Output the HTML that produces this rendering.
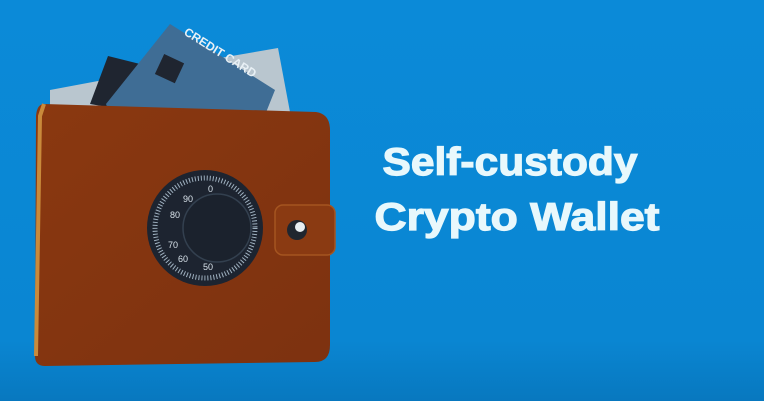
<!DOCTYPE html>
<html><head><style>
html,body{margin:0;padding:0;width:764px;height:401px;overflow:hidden;background:#0a88d6}
</style></head><body>
<svg width="764" height="401" viewBox="0 0 764 401" xmlns="http://www.w3.org/2000/svg">
<defs>
<linearGradient id="bg" x1="0" y1="0" x2="0" y2="1"><stop offset="0" stop-color="#0b8ad8"/><stop offset="0.85" stop-color="#0a86d2"/><stop offset="1" stop-color="#0877bd"/></linearGradient>
<linearGradient id="band" x1="0" y1="0" x2="0" y2="1"><stop offset="0" stop-color="#0a86d2"/><stop offset="1" stop-color="#0878bf"/></linearGradient>
<linearGradient id="wal" x1="0" y1="0" x2="1" y2="1"><stop offset="0" stop-color="#8a3810"/><stop offset="1" stop-color="#7d3210"/></linearGradient>
</defs>
<rect width="764" height="401" fill="url(#bg)"/>
<rect y="340" width="764" height="61" fill="url(#band)"/>
<!-- cash -->
<polygon points="50,90 220,58 278,48 290,112 50,112" fill="#b9c6cf"/>
<!-- dark card -->
<polygon points="90,104 108,56 140,64 125,110" fill="#1f2530"/>
<!-- credit card -->
<polygon points="106,104 170,24 275,90 265,115 110,115" fill="#3f6d95"/>
<rect x="158" y="58" width="22" height="22" fill="#1f2530" transform="rotate(25 170 70)"/>
<text x="172" y="47" fill="#e8f0f5" font-family="Liberation Sans" font-weight="bold" font-size="12" transform="rotate(32 200 60)">CREDIT CARD</text>
<!-- wallet -->
<path d="M44,104 L316,112 Q330,114 330,130 L330,345 Q330,362 315,362 L45,366 Q35,366 35,356 L36,116 Q37,104 44,104 Z" fill="url(#wal)"/>
<path d="M44,104 L40,116 L36,356" stroke="#c98a3b" stroke-width="4" fill="none"/>
<!-- strap -->
<rect x="275" y="205" width="60" height="50" rx="8" fill="#8a3a12" stroke="#a55520" stroke-width="1.5"/>
<circle cx="297" cy="230" r="10" fill="#20262f"/>
<circle cx="300" cy="227" r="5" fill="#e8eef2"/>
<!-- dial -->
<circle cx="205" cy="228" r="58" fill="#1d2430"/>
<circle cx="205" cy="228" r="50" fill="none" stroke="#9fb1c0" stroke-width="5" stroke-dasharray="1 2"/>
<circle cx="217" cy="228" r="34" fill="#1b222d" stroke="#33404f" stroke-width="1.5"/>
<g fill="#d8e2ea" font-family="Liberation Sans" font-size="9">
<text x="183" y="202">90</text><text x="208" y="192">0</text><text x="170" y="218">80</text><text x="168" y="248">70</text><text x="178" y="262">60</text><text x="203" y="270">50</text></g>
<g stroke="#e8f8fc" stroke-width="1.2" fill="#e8f8fc" font-family="Liberation Sans" font-weight="bold" font-size="39">
<text x="510" y="175" text-anchor="middle" textLength="255" lengthAdjust="spacingAndGlyphs">Self-custody</text>
<text x="517" y="230" text-anchor="middle" textLength="285" lengthAdjust="spacingAndGlyphs">Crypto Wallet</text>
</g>
</svg>
</body></html>
